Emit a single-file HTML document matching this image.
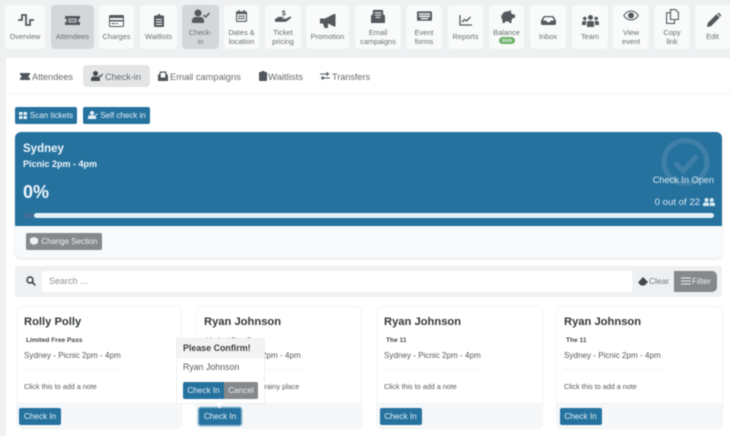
<!DOCTYPE html>
<html><head><meta charset="utf-8">
<style>
html,body{margin:0;padding:0}
body{width:730px;height:436px;position:relative;overflow:hidden;background:#eef0f1;font-family:"Liberation Sans",sans-serif;color:#4a4e52}
div,span,svg{position:absolute;box-sizing:border-box}
.root{left:0;top:0;width:730px;height:436px;filter:blur(.4px);overflow:hidden}
.t{top:5px;height:44px;background:#f9fafa;border-radius:4px;text-align:center;font-size:7.4px;line-height:9px;color:#6a6e72}
.t.a{background:#d4d7da}
.t span{left:0;right:0}
.t svg{fill:#54595e}
.tab{top:76.5px;font-size:9.1px;line-height:10px;color:#666a6e;white-space:nowrap;transform:translateY(-5px)}
.btn{background:#26729f;color:#e4f0f6;border-radius:2px;font-size:8.2px;text-align:center;white-space:nowrap}
.card{top:306px;height:123px;background:#fff;border:1px solid #f3f4f5;border-radius:6px;overflow:hidden}
.name{left:7.5px;top:8px;font-size:11.2px;font-weight:bold;color:#33373a;white-space:nowrap;line-height:14px}
.pass{left:9.5px;top:29px;font-size:6.6px;font-weight:bold;color:#44484c;white-space:nowrap;line-height:9px}
.sec{left:7.5px;top:43px;font-size:8.1px;color:#55595d;white-space:nowrap;line-height:11px}
.hr{left:7.5px;top:62px;width:97px;height:1px;background:#f3f4f5}
.note{left:7.5px;top:75px;font-size:7.2px;color:#55595d;white-space:nowrap;line-height:9px}
.foot{left:0;right:0;top:96px;height:27px;background:#f5f7f9;border-top:1px solid #eff1f3}
</style></head><body><div class="root">

<div class="t" style="left:5px;width:40px"><svg style="left:12px;top:8px" width="18" height="14" viewBox="0 0 18 14"><path d="M1 7H5V2H9V12H13V7H17" fill="none" stroke="#54595e" stroke-width="1.800"/></svg><span style="top:26.500px">Overview</span></div>
<div class="t a" style="left:51px;width:43px"><svg style="left:14px;top:11px" width="15" height="9" viewBox="0 0 17 11" preserveAspectRatio="none"><path d="M0 0H17V3.500A2 2 0 0 0 17 7.500V11H0V7.500A2 2 0 0 0 0 3.500ZM4 3V8H13V3Z"/><path d="M5 4H12V7H5Z" opacity=".7"/></svg><span style="top:26.500px">Attendees</span></div>
<div class="t" style="left:99px;width:35px"><svg style="left:10px;top:10px" width="15" height="12" viewBox="0 0 15 12"><path d="M1.500 0H13.500A1.500 1.500 0 0 1 15 1.500V10.500A1.500 1.500 0 0 1 13.500 12H1.500A1.500 1.500 0 0 1 0 10.500V1.500A1.500 1.500 0 0 1 1.500 0ZM1 3V5H14V3ZM1 6.500V11H14V6.500ZM2.500 8H6V9H2.500ZM7 8H9V9H7Z" fill-rule="evenodd"/></svg><span style="top:26.500px">Charges</span></div>
<div class="t" style="left:140px;width:37px"><svg style="left:14px;top:9px" width="10" height="13" viewBox="0 0 10 13"><path d="M1 1.500H3.500A1.500 1.500 0 0 1 6.500 1.500H9A1 1 0 0 1 10 2.500V12A1 1 0 0 1 9 13H1A1 1 0 0 1 0 12V2.500A1 1 0 0 1 1 1.500ZM2 5V6H8V5ZM2 7.500V8.500H8V7.500ZM2 10V11H8V10Z" fill-rule="evenodd"/></svg><span style="top:26.500px">Waitlists</span></div>
<div class="t a" style="left:182px;width:37px"><svg style="left:10px;top:4px" width="18" height="14" viewBox="0 0 18 14"><circle cx="6" cy="4" r="3.500"/><path d="M0 14V11.500A3.500 3.500 0 0 1 3.500 8H8.500A3.500 3.500 0 0 1 12 11.500V14Z"/><path d="M11.500 6L13.500 8L17.500 4" fill="none" stroke="#54595e" stroke-width="1.500"/></svg><span style="top:22.500px">Check-<br>in</span></div>
<div class="t" style="left:224px;width:35px"><svg style="left:12px;top:5px" width="11" height="12" viewBox="0 0 12 13"><path d="M2.500 0H4V1.500H8V0H9.500V1.500H11A1 1 0 0 1 12 2.500V12A1 1 0 0 1 11 13H1A1 1 0 0 1 0 12V2.500A1 1 0 0 1 1 1.500H2.500ZM1.200 4.500V11.800H10.800V4.500ZM2.500 6H4.500V7.500H2.500ZM5 6H7V7.500H5ZM7.500 6H9.500V7.500H7.500ZM2.500 8.500H4.500V10H2.500ZM5 8.500H7V10H5ZM7.500 8.500H9.500V10H7.500Z" fill-rule="evenodd"/></svg><span style="top:22.500px">Dates &amp;<br>location</span></div>
<div class="t" style="left:265px;width:36px"><svg style="left:9.500px;top:4px" width="18" height="14" viewBox="0 0 20 15"><text x="7.500" y="7" font-size="8" font-weight="bold" fill="#54595e" font-family="Liberation Sans">$</text><path d="M0 11L4 8.500H9L11 9.500H8V10.500H12L16 8.500A1 1 0 0 1 17.500 10L12 14H0Z"/></svg><span style="top:22.500px">Ticket<br>pricing</span></div>
<div class="t" style="left:306px;width:43px"><svg style="left:14px;top:9px" width="16" height="15" viewBox="0 0 16 15"><path d="M0 4.500H5L14 0H15.500V12.500H14L8 9.500V14H4.500L3 9.500H0Z"/></svg><span style="top:26.500px">Promotion</span></div>
<div class="t" style="left:355px;width:46px"><svg style="left:16px;top:4px" width="14" height="14" viewBox="0 0 15 15"><path d="M0 7L2 5.500V2A1 1 0 0 1 3 1H12A1 1 0 0 1 13 2V5.500L15 7V15H0ZM4 3.500V4.500H11V3.500ZM4 6V7H11V6ZM5 8.500V9.500H10V8.500Z" fill-rule="evenodd"/></svg><span style="top:22.500px">Email<br>campaigns</span></div>
<div class="t" style="left:406px;width:36px"><svg style="left:11px;top:6px" width="15" height="10" viewBox="0 0 16 10"><path d="M1 0H15A1 1 0 0 1 16 1V9A1 1 0 0 1 15 10H1A1 1 0 0 1 0 9V1A1 1 0 0 1 1 0ZM2 2V3.500H14V2ZM2 4.500V6H14V4.500ZM4 7V8.500H12V7Z" fill-rule="evenodd"/></svg><span style="top:22.500px">Event<br>forms</span></div>
<div class="t" style="left:448px;width:35px"><svg style="left:11px;top:10px" width="13" height="11" viewBox="0 0 13 11"><path d="M1 0V10H13M3 7L5.500 4.500L7.500 6L11.500 2" fill="none" stroke="#54595e" stroke-width="1.300"/></svg><span style="top:26.500px">Reports</span></div>
<div class="t" style="left:489px;width:35px"><svg style="left:10px;top:4px" width="16" height="14" viewBox="0 0 16 14"><path d="M1 5.500A1 1 0 0 0 3 6C4 3 7 2 9 2.500L12 1V4L14 5.500H16V9H14L12.500 11V14H10V12.500H6V14H3.500V11C2.500 10 2.200 8 2.500 7A2 2 0 0 1 1 5.500Z"/></svg><span style="top:22.500px">Balance</span><div style="left:10px;top:32px;width:16px;height:7px;background:#6cb069;border-radius:4px;color:#eaf5e8;font-size:4.500px;line-height:7px;font-weight:bold">$906</div></div>
<div class="t" style="left:530px;width:36px"><svg style="left:11px;top:11px" width="15" height="9" viewBox="0 0 16 11" preserveAspectRatio="none"><path d="M3 0H13L16 5.500V9A2 2 0 0 1 14 11H2A2 2 0 0 1 0 9V5.500ZM4 1.500L2 5.500H5.500L6.500 7.500H9.500L10.500 5.500H14L12 1.500Z" fill-rule="evenodd"/></svg><span style="top:26.500px">Inbox</span></div>
<div class="t" style="left:572px;width:36px"><svg style="left:10px;top:10px" width="17" height="12" viewBox="0 0 17 12"><circle cx="8.500" cy="2.500" r="2.500"/><circle cx="2.800" cy="3.500" r="1.800"/><circle cx="14.200" cy="3.500" r="1.800"/><path d="M5 12V8A2 2 0 0 1 7 6H10A2 2 0 0 1 12 8V12ZM0 10V8A2 2 0 0 1 2 6H4.500L4 8V10ZM17 10V8A2 2 0 0 0 15 6H12.500L13 8V10Z"/></svg><span style="top:26.500px">Team</span></div>
<div class="t" style="left:613px;width:36px"><svg style="left:10px;top:5px" width="16" height="11" viewBox="0 0 16 11"><path d="M.8 5.500C3 2 5.500 1 8 1S13 2 15.200 5.500C13 9 10.500 10 8 10S3 9 .8 5.500Z" fill="none" stroke="#54595e" stroke-width="1.100"/><circle cx="8" cy="5.500" r="3"/></svg><span style="top:22.500px">View<br>event</span></div>
<div class="t" style="left:654px;width:36px"><svg style="left:12px;top:4px" width="13" height="15" viewBox="0 0 13 15"><path d="M4.500 .6H9.500L12.400 3.500V10.500H4.500ZM.6 3.800H4.500V10.500H8.500V14.400H.6Z" fill="none" stroke="#54595e" stroke-width="1.100"/></svg><span style="top:22.500px">Copy<br>link</span></div>
<div class="t" style="left:695px;width:40px"><svg style="left:11.500px;top:8px" width="14" height="14" viewBox="0 0 14 14"><path d="M0 14L.8 10L9.500 1.300L12.700 4.500L4 13.200ZM10.300.5L11 0H12L14 2V3L13.500 3.700Z"/></svg><span style="left:0;width:35px;right:auto;top:26.500px">Edit</span></div>

<div style="left:6px;top:58px;width:730px;height:390px;background:#fff"></div>
<div style="left:6px;top:93px;width:724px;height:1px;background:#f4f5f6"></div>

<div style="left:83px;top:65px;width:67px;height:22px;background:#e3e4e5;border-radius:4px"></div>
<svg style="left:20px;top:72.500px" width="10" height="7" viewBox="0 0 10 7"><path d="M0 0H10V2A1.500 1.500 0 0 0 10 5V7H0V5A1.500 1.500 0 0 0 0 2Z" fill="#50565b"/></svg>
<div class="tab" style="left:32px">Attendees</div>
<svg style="left:91px;top:71px" width="12" height="10" viewBox="0 0 12 10"><circle cx="4.500" cy="2.500" r="2.500" fill="#44494e"/><path d="M0 10V8A2.500 2.500 0 0 1 2.500 5.500H6.500A2.500 2.500 0 0 1 9 8V10Z" fill="#44494e"/><path d="M8 4.500L9.300 5.700L11.700 3" fill="none" stroke="#44494e" stroke-width="1.100"/></svg>
<div class="tab" style="left:105px">Check-in</div>
<svg style="left:158px;top:71px" width="10" height="10" viewBox="0 0 10 10"><path d="M0 4L1.500 3V1.500A1 1 0 0 1 2.500.5H7.500A1 1 0 0 1 8.500 1.500V3L10 4V10H0ZM2.700 1.700V6.500H7.300V1.700Z" fill="#50565b" fill-rule="evenodd"/></svg>
<div class="tab" style="left:170px;font-size:9.300px">Email campaigns</div>
<svg style="left:258.500px;top:71px" width="8" height="10" viewBox="0 0 8 10"><path d="M.7 1H2.500A1.500 1.500 0 0 1 5.500 1H7.300A.7.7 0 0 1 8 1.700V9.300A.7.7 0 0 1 7.300 10H.7A.7.7 0 0 1 0 9.300V1.700A.7.7 0 0 1 .7 1Z" fill="#50565b"/></svg>
<div class="tab" style="left:268px;font-size:9.500px;transform:translateY(-4px)">Waitlists</div>
<svg style="left:320px;top:72px" width="10" height="8" viewBox="0 0 10 8"><path d="M0 2H8M6.500 .3L8.500 2L6.500 3.700M10 6H2M3.500 4.300L1.500 6L3.500 7.700" fill="none" stroke="#50565b" stroke-width="1.100"/></svg>
<div class="tab" style="left:332px">Transfers</div>

<div class="btn" style="left:15px;top:107px;width:62px;height:17px;line-height:17px;padding-left:11px;font-size:8px">Scan tickets</div>
<svg style="left:19px;top:112px" width="8" height="7" viewBox="0 0 8 7"><path d="M0 0H3.500V3H0ZM4.500 0H8V3H4.500ZM0 4H3.500V7H0ZM4.500 4H8V7H4.500Z" fill="#e4f0f6"/></svg>
<div class="btn" style="left:83px;top:107px;width:67px;height:17px;line-height:17px;padding-left:13px;font-size:8px">Self check in</div>
<svg style="left:88px;top:111px" width="10" height="8" viewBox="0 0 10 8"><circle cx="4" cy="2" r="2" fill="#e4f0f6"/><path d="M0 8V6.500A2 2 0 0 1 2 4.500H6A2 2 0 0 1 8 6.500V8ZM7 3.500L8 4.500L9.800 2.500" fill="#e4f0f6" stroke="#e4f0f6" stroke-width=".4"/></svg>

<div style="left:15px;top:132px;width:707px;height:126px;background:#f8f9fb;border-radius:6px;box-shadow:0 1px 2px rgba(0,0,0,.12)"></div>
<div style="left:15px;top:132px;width:707px;height:94px;background:#26729f;border-radius:6px 6px 0 0"></div>
<svg style="left:660px;top:137px" width="50" height="50" viewBox="0 0 50 50"><circle cx="25.500" cy="25" r="21.500" fill="none" stroke="#4080a8" stroke-width="5"/><path d="M15 26L23 34L37 19" fill="none" stroke="#4080a8" stroke-width="5"/></svg>
<div style="left:23px;top:142px;font-size:11.500px;font-weight:bold;color:#eef6fa;line-height:14px">Sydney</div>
<div style="left:23px;top:158px;font-size:9px;font-weight:bold;color:#eef6fa;line-height:12px">Picnic 2pm - 4pm</div>
<div style="left:23px;top:182px;font-size:18px;font-weight:bold;color:#eef6fa;line-height:21px">0%</div>
<div style="right:16px;top:175px;font-size:9.200px;color:#d8e9f2;line-height:11px">Check In Open</div>
<div style="right:30px;top:197px;font-size:9.600px;color:#d8e9f2;line-height:11px">0 out of 22</div>
<svg style="left:703px;top:198px" width="12" height="8" viewBox="0 0 12 8"><circle cx="3.500" cy="2" r="2" fill="#d8e9f2"/><circle cx="8.700" cy="2" r="2" fill="#d8e9f2"/><path d="M0 8V6.500A2 2 0 0 1 2 4.500H5A2 2 0 0 1 6 6.500V8ZM6.800 8V6A2 2 0 0 0 6.500 4.500H10A2 2 0 0 1 12 6.500V8Z" fill="#d8e9f2"/></svg>
<div style="left:34px;top:213px;width:680px;height:5px;background:#e4f1f7;border-radius:2.500px"></div>
<div style="left:24px;top:213px;width:10px;height:5px;background:#3e6f97"></div>
<div class="btn" style="left:26px;top:233px;width:76px;height:17px;line-height:17px;background:#85898c;padding-left:11px;color:#eef0f1;font-size:7.900px">Change Section</div>
<svg style="left:30px;top:237px" width="8" height="8" viewBox="0 0 8 8"><path d="M4 0L8 1.500V6L4 8L0 6V1.500Z" fill="#eef0f1"/></svg>

<div style="left:15px;top:266px;width:707px;height:31px;background:#eef0f2;border-radius:2px"></div>
<div style="left:42px;top:271px;width:590px;height:21px;background:#fff"></div>
<svg style="left:26px;top:276px" width="10" height="10" viewBox="0 0 10 10"><circle cx="4" cy="4" r="3" fill="none" stroke="#33373a" stroke-width="1.400"/><path d="M6.300 6.300L9.300 9.300" stroke="#33373a" stroke-width="1.500"/></svg>
<div style="left:49px;top:276px;font-size:9px;color:#8d9195;line-height:11px">Search ...</div>
<svg style="left:638px;top:277px" width="10" height="9" viewBox="0 0 10 9"><path d="M3 8.500L0 5.500L5 0L10 5L6.500 8.500Z" fill="#44484c"/></svg>
<div style="left:649px;top:276px;font-size:8.400px;color:#74787c;line-height:11px">Clear</div>
<div style="left:674px;top:271px;width:43px;height:21px;background:#85898c;border-radius:0 5px 5px 0"></div>
<svg style="left:681px;top:277px" width="10" height="8" viewBox="0 0 10 8"><path d="M0 1H10M0 4H10M0 7H10" stroke="#eef0f1" stroke-width="1.100"/></svg>
<div style="left:692px;top:276px;font-size:8.400px;color:#eef0f1;line-height:11px">Filter</div>

<div class="card" style="left:15.500px;width:166.500px"><div class="name">Rolly Polly</div><div class="pass">Limited Free Pass</div><div class="sec">Sydney - Picnic 2pm - 4pm</div><div class="hr"></div><div class="note">Click this to add a note</div><div class="foot"></div><div class="btn" style="left:2.500px;top:101px;width:42px;height:17px;line-height:17px">Check In</div></div>
<div class="card" style="left:195.500px;width:166.500px"><div class="name">Ryan Johnson</div><div class="pass">Limited Free Pass</div><div class="sec">Sydney - Picnic 2pm - 4pm</div><div class="hr"></div><div class="note" style="left:68px">rainy place</div><div class="foot"></div></div>
<div class="btn" style="left:199px;top:408px;width:42px;height:17px;line-height:17px;box-shadow:0 0 0 1.500px #8fbad3">Check In</div>
<div class="card" style="left:375.500px;width:167px"><div class="name">Ryan Johnson</div><div class="pass">The 11</div><div class="sec">Sydney - Picnic 2pm - 4pm</div><div class="hr"></div><div class="note">Click this to add a note</div><div class="foot"></div><div class="btn" style="left:3px;top:101px;width:42px;height:17px;line-height:17px">Check In</div></div>
<div class="card" style="left:555.500px;width:167px"><div class="name">Ryan Johnson</div><div class="pass">The 11</div><div class="sec">Sydney - Picnic 2pm - 4pm</div><div class="hr"></div><div class="note">Click this to add a note</div><div class="foot"></div><div class="btn" style="left:3px;top:101px;width:42px;height:17px;line-height:17px">Check In</div></div>

<div style="left:176px;top:338px;width:89px;height:66px;background:#fff;border:1px solid #eceeef"></div>
<div style="left:177px;top:339px;width:87px;height:19px;background:#f3f3f3;font-size:8.900px;font-weight:bold;color:#3a3e42;line-height:18px;padding-left:6px;white-space:nowrap">Please Confirm!</div>
<div style="left:183px;top:362px;font-size:8.800px;color:#55595d;line-height:11px">Ryan Johnson</div>
<div class="btn" style="left:183px;top:382px;width:41px;height:17px;line-height:17px;border-radius:2px 0 0 2px">Check In</div>
<div class="btn" style="left:224px;top:382px;width:34px;height:17px;line-height:17px;background:#85898c;border-radius:0 2px 2px 0">Cancel</div>
<div style="left:216px;top:400px;width:7px;height:7px;background:#fff;transform:rotate(45deg);border-right:1px solid #eceeef;border-bottom:1px solid #eceeef"></div>

</div></body></html>
